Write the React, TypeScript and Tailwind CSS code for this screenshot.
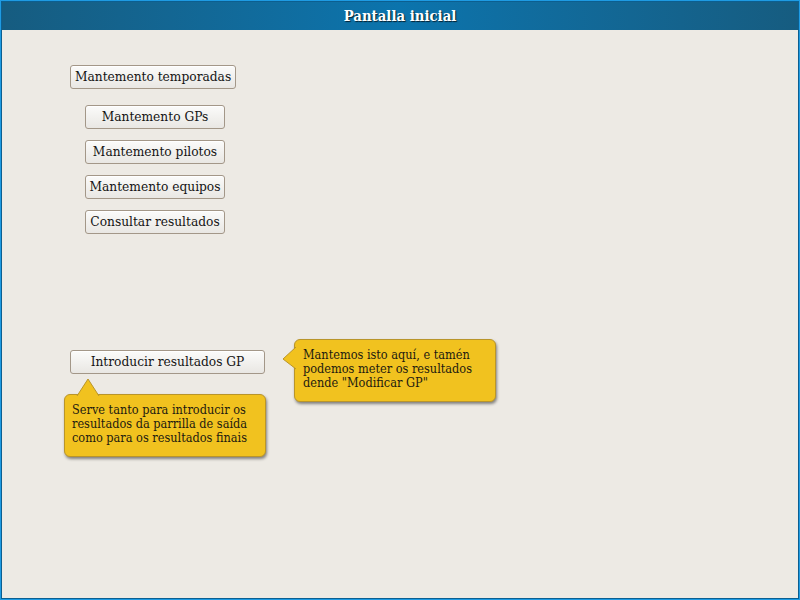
import React from 'react'

const serif = { fontFamily: '"DejaVu Serif Condensed", "DejaVu Serif", serif', fontStretch: 'condensed' as const }

function Btn({ label, className = '' }: { label: string; className?: string }) {
  return (
    <button
      className={`h-[24px] whitespace-nowrap rounded-[3px] border border-[#a39788] bg-gradient-to-b from-[#fbfbfa] to-[#e9e7e3] text-[13.6px] leading-none text-[#141414] shadow-[inset_0_1px_0_#ffffff] ${className}`}
    >
      {label}
    </button>
  )
}

function Tip({ lines, className = '', arrow }: { lines: string[]; className?: string; arrow: 'left' | 'top' }) {
  return (
    <div
      className={`absolute rounded-[6px] border border-[#b9952a] bg-[#f1c21f] text-[12.6px] leading-[14px] text-[#1d1a10] shadow-[1px_2px_3px_rgba(0,0,0,0.45)] ${className}`}
    >
      {arrow === 'left' ? (
        <svg className="absolute left-[-13px] top-[6px]" width="14" height="24" viewBox="0 0 14 24">
          <polygon points="14,1 1,13 14,23" fill="#f1c21f" />
          <polyline points="14,1 1,13 14,23" fill="none" stroke="#b9952a" strokeWidth="1" />
        </svg>
      ) : (
        <svg className="absolute left-[11px] top-[-17px]" width="24" height="18" viewBox="0 0 24 18">
          <polygon points="1,18 12,1 23,18" fill="#f1c21f" />
          <polyline points="1,18 12,1 23,18" fill="none" stroke="#b9952a" strokeWidth="1" />
        </svg>
      )}
      {lines.map(l => (
        <div key={l} className="whitespace-nowrap">{l}</div>
      ))}
    </div>
  )
}

export default function App() {
  return (
    <div className="h-[600px] w-[800px] border border-[#1e9be3] bg-[#0f5a86]" style={serif}>
      <div className="flex h-full w-full flex-col border border-[#0c5f90]">
        {/* Title bar */}
        <div className="flex h-[28px] items-center justify-center bg-gradient-to-r from-[#165c80] via-[#0b74ad] to-[#165c80]">
          <span className="text-[14.8px] font-bold text-white [text-shadow:1px_1px_1px_rgba(0,0,0,0.7)]">
            Pantalla inicial
          </span>
        </div>

        {/* Content */}
        <div className="relative flex flex-1 flex-col items-start bg-[#edeae4] pl-[68px] pt-[35px]">
          <Btn label="Mantemento temporadas" className="px-[4px]" />
          <div className="mt-[16px] ml-[15px] flex flex-col gap-[11px]">
            <Btn label="Mantemento GPs" className="w-[140px]" />
            <Btn label="Mantemento pilotos" className="w-[140px]" />
            <Btn label="Mantemento equipos" className="w-[140px]" />
            <Btn label="Consultar resultados" className="w-[140px]" />
          </div>
          <Btn label="Introducir resultados GP" className="mt-[116px] w-[195px]" />

          <Tip
            arrow="left"
            className="left-[292px] top-[309px] w-[202px] px-[8px] pt-[8px] pb-[11px]"
            lines={['Mantemos isto aquí, e tamén', 'podemos meter os resultados', 'dende "Modificar GP"']}
          />
          <Tip
            arrow="top"
            className="left-[62px] top-[364px] w-[202px] px-[7px] pt-[8px] pb-[11px]"
            lines={['Serve tanto para introducir os', 'resultados da parrilla de saída', 'como para os resultados finais']}
          />
        </div>
      </div>
    </div>
  )
}
